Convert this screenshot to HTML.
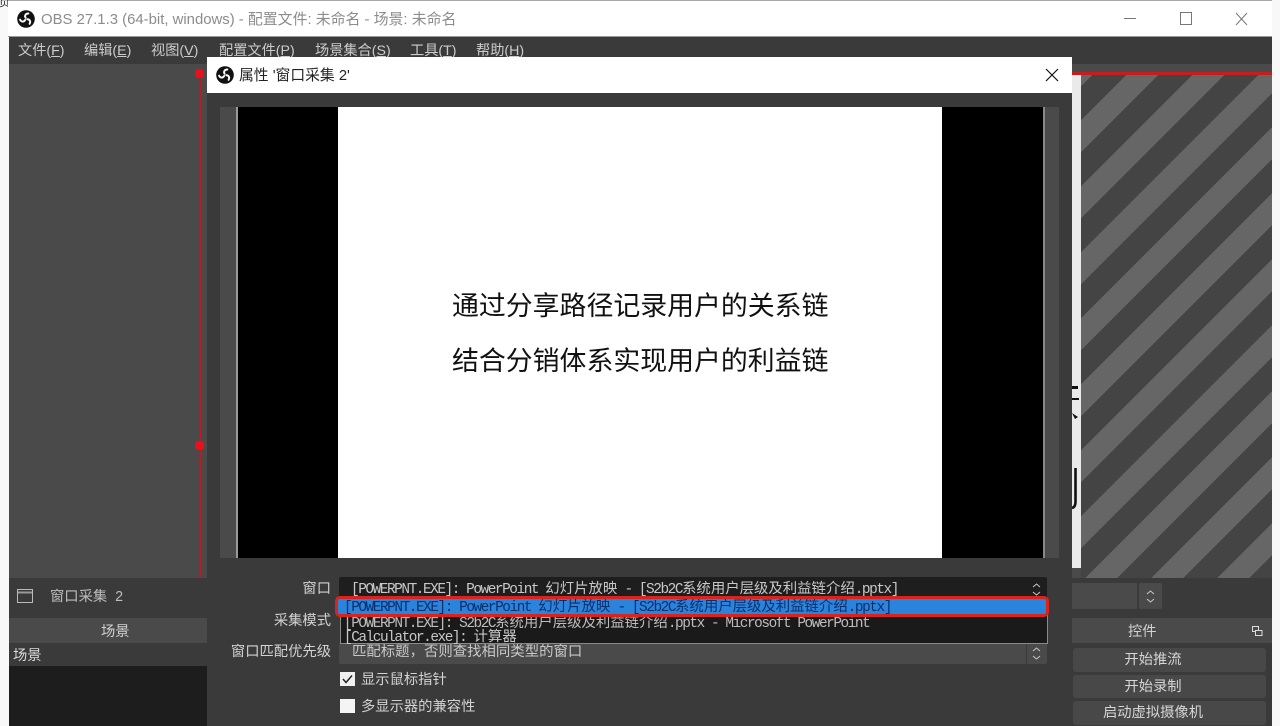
<!DOCTYPE html>
<html lang="zh"><head><meta charset="utf-8"><style>
html,body{margin:0;padding:0;width:1280px;height:726px;overflow:hidden;background:#f8f8f8}
*{box-sizing:border-box}
#r{position:absolute;left:0;top:0;width:1280px;height:726px;filter:blur(.35px)}
.a{position:absolute}
.t{position:absolute;white-space:nowrap;font-family:"Liberation Sans","Noto Sans CJK SC",sans-serif;color:#d2d2d2;font-size:14.300px;line-height:20px}
.m{position:absolute;white-space:nowrap;font-family:"Noto Sans CJK SC",sans-serif;font-size:14.400px;line-height:16px;color:#c8c8c8}
.m i{font-style:normal;font-family:"Liberation Mono",monospace;letter-spacing:-1.440px}
.b{position:absolute;left:1073px;width:193px;padding-right:33px;padding-top:1px;background:#484848;border-radius:3px;text-align:center;color:#d6d6d6;font:14.300px/23px "Liberation Sans","Noto Sans CJK SC",sans-serif}
.n{font-size:14.200px;color:#cccccc}
u{text-decoration:underline;text-underline-offset:1px}
</style></head><body><div id="r">
<div class="t" style="left:-1px;top:-7px;color:#222;font-size:11px">页</div>
<div class="a" style="left:8px;top:0;width:1264px;height:37px;background:#fff;border-top:1px solid #aaa;border-bottom:1px solid #999"></div>
<svg class="a" style="left:17px;top:10px" width="18" height="18" viewBox="0 0 18 18"><circle cx="9" cy="9" r="8.800" fill="#111"/><g fill="none" stroke="#fff" stroke-width="1.900" stroke-linecap="round"><path d="M8.600 7.800C7.300 5.800 8.600 3.400 11.400 3.500"/><path transform="rotate(120 9 9)" d="M8.600 7.800C7.300 5.800 8.600 3.400 11.400 3.500"/><path transform="rotate(240 9 9)" d="M8.600 7.800C7.300 5.800 8.600 3.400 11.400 3.500"/></g></svg>
<div class="t" style="left:41px;top:10px;color:#8c8c8c;font-size:14.900px">OBS 27.1.3 (64-bit, windows) - 配置文件: 未命名 - 场景: 未命名</div>
<svg class="a" style="left:1110px;top:5px" width="150" height="28" viewBox="0 0 150 28" fill="none" stroke="#777" stroke-width="1"><path d="M14 13.500H26"/><rect x="70.500" y="7.500" width="11" height="12"/><path d="M126 8L137 20M137 8L126 20"/></svg>

<div class="a" style="left:9px;top:37px;width:1263px;height:27px;background:#3a3a3a"></div>
<div class="t n" style="left:18px;top:41px">文件(<u>F</u>)</div>
<div class="t n" style="left:84px;top:41px">编辑(<u>E</u>)</div>
<div class="t n" style="left:151px;top:41px">视图(<u>V</u>)</div>
<div class="t n" style="left:219px;top:41px">配置文件(<u>P</u>)</div>
<div class="t n" style="left:315px;top:41px">场景集合(<u>S</u>)</div>
<div class="t n" style="left:410px;top:41px">工具(<u>T</u>)</div>
<div class="t n" style="left:476px;top:41px">帮助(<u>H</u>)</div>

<div class="a" style="left:9px;top:64px;width:1263px;height:514px;background:#4a4a4a"></div>
<div class="a" style="left:1081px;top:75px;width:191px;height:503px;background:repeating-linear-gradient(135deg,#666 0,#666 8px,#444 8px,#444 32px,#666 32px,#666 46.670px)"></div>
<div class="a" style="left:1072px;top:75px;width:9px;height:493px;background:#eaeaea"></div>
<svg class="a" style="left:1072px;top:380px" width="9" height="135" viewBox="0 0 9 135" fill="#111"><rect x="0" y="6" width="6" height="3"/><rect x="0" y="18" width="7" height="2"/><path d="M0 33L6 37L3 39Z"/><path d="M3.500 88V122Q3.500 127 0 128" fill="none" stroke="#111" stroke-width="2.600"/></svg>
<div class="a" style="left:1072px;top:72px;width:200px;height:3px;background:#c41f1f"></div>
<div class="a" style="left:199px;top:73px;width:3px;height:505px;background:#b81c22"></div>
<div class="a" style="left:195px;top:69px;width:9px;height:9px;background:#e8101a;border-radius:3px"></div>
<div class="a" style="left:195px;top:441px;width:9px;height:9px;background:#e8101a;border-radius:3px"></div>

<div class="a" style="left:9px;top:578px;width:1263px;height:40px;background:#3a3a3a"></div>
<svg class="a" style="left:16px;top:588px" width="18" height="16" viewBox="0 0 18 16" fill="none" stroke="#bbb"><rect x="1.500" y="1.500" width="15" height="13"/><path d="M2 4.500H16" stroke="#999" stroke-width="2"/></svg>
<div class="t" style="left:50px;top:587px;color:#bdbdbd">窗口采集 &nbsp;2</div>
<div class="a" style="left:1072px;top:583px;width:65px;height:26px;background:#4a4a4a"></div>
<div class="a" style="left:1139px;top:583px;width:23px;height:26px;background:#4a4a4a;border-radius:2px"></div>
<svg class="a" style="left:1145px;top:588px" width="11" height="17" viewBox="0 0 11 17" fill="none" stroke="#c8c8c8"><path d="M2 6L5.500 3L9 6M2 11L5.500 14L9 11"/></svg>

<div class="a" style="left:9px;top:618px;width:198px;height:25px;background:#4a4a4a"></div>
<div class="t" style="left:101px;top:622px">场景</div>
<div class="a" style="left:9px;top:643px;width:198px;height:23px;background:#3a3a3a"></div>
<div class="a" style="left:9px;top:666px;width:198px;height:60px;background:#1d1d1d"></div>
<div class="t" style="left:13px;top:646px;color:#dcdcdc">场景</div>

<div class="a" style="left:1072px;top:618px;width:200px;height:25px;background:#4a4a4a"></div>
<div class="t" style="left:1128px;top:622px">控件</div>
<svg class="a" style="left:1251px;top:625px" width="12" height="12" viewBox="0 0 12 12" fill="none" stroke="#ddd"><rect x="1.500" y="1.500" width="6" height="5"/><rect x="4.500" y="5.500" width="6.500" height="5" fill="#4a4a4a"/></svg>
<div class="a" style="left:1072px;top:643px;width:200px;height:83px;background:#3a3a3a"></div>
<div class="b" style="top:648px;height:24px">开始推流</div>
<div class="b" style="top:675px;height:23px">开始录制</div>
<div class="b" style="top:701px;height:24px">启动虚拟摄像机</div>

<div class="a" style="left:207px;top:57px;width:865px;height:669px;background:#3a3a3a"></div>
<div class="a" style="left:207px;top:57px;width:865px;height:36px;background:#fff"></div>
<svg class="a" style="left:216px;top:66px" width="18" height="18" viewBox="0 0 18 18"><circle cx="9" cy="9" r="8.800" fill="#111"/><g fill="none" stroke="#fff" stroke-width="1.900" stroke-linecap="round"><path d="M8.600 7.800C7.300 5.800 8.600 3.400 11.400 3.500"/><path transform="rotate(120 9 9)" d="M8.600 7.800C7.300 5.800 8.600 3.400 11.400 3.500"/><path transform="rotate(240 9 9)" d="M8.600 7.800C7.300 5.800 8.600 3.400 11.400 3.500"/></g></svg>
<div class="t" style="left:239px;top:66px;color:#222;font-size:14.800px">属性 '窗口采集 2'</div>
<svg class="a" style="left:1045px;top:68px" width="14" height="14" viewBox="0 0 14 14" fill="none" stroke="#111" stroke-width="1.200"><path d="M1 1L13 13M13 1L1 13"/></svg>

<div class="a" style="left:220px;top:107px;width:839px;height:451px;background:#4a4a4a"></div>
<div class="a" style="left:236px;top:107px;width:2px;height:451px;background:#999"></div>
<div class="a" style="left:1043px;top:107px;width:2px;height:451px;background:#888"></div>
<div class="a" style="left:238px;top:107px;width:805px;height:451px;background:#000"></div>
<div class="a" style="left:338px;top:107px;width:604px;height:451px;background:#fff"></div>
<div class="t" style="left:452px;top:286px;color:#111;font-size:26.900px;line-height:36px;font-family:'Noto Sans CJK SC',sans-serif">通过分享路径记录用户的关系链</div>
<div class="t" style="left:452px;top:341px;color:#111;font-size:26.900px;line-height:36px;font-family:'Noto Sans CJK SC',sans-serif">结合分销体系实现用户的利益链</div>

<div class="t" style="right:949px;top:579px">窗口</div>
<div class="t" style="right:949px;top:611px">采集模式</div>
<div class="t" style="right:949px;top:642px">窗口匹配优先级</div>

<div class="a" style="left:339px;top:577px;width:708px;height:23px;background:#1e1e1e;border-radius:2px"></div>
<div class="m" style="left:351px;top:580px"><i>[POWERPNT.EXE]: PowerPoint </i>幻灯片放映<i> - [S2b2C</i>系统用户层级及利益链介绍<i>.pptx]</i></div>
<svg class="a" style="left:1031px;top:581px" width="11" height="16" viewBox="0 0 11 16" fill="none" stroke="#c8c8c8"><path d="M2 6L5.500 3L9 6M2 11L5.500 14L9 11"/></svg>

<div class="a" style="left:339px;top:643px;width:708px;height:21px;background:#4a4a4a;border-radius:2px"></div>
<div class="a" style="left:1026px;top:643px;width:1px;height:21px;background:#3a3a3a"></div>
<div class="m" style="left:352px;top:643px">匹配标题，否则查找相同类型的窗口</div>
<svg class="a" style="left:1031px;top:645px" width="11" height="16" viewBox="0 0 11 16" fill="none" stroke="#c8c8c8"><path d="M2 6L5.500 3L9 6M2 11L5.500 14L9 11"/></svg>

<div class="a" style="left:340px;top:599px;width:708px;height:45px;background:#1a1a1a;border:1px solid #8a8a8a;border-top:0"></div>
<div class="m" style="left:344px;top:614px;color:#bdbdbd"><i>[POWERPNT.EXE]: S2b2C</i>系统用户层级及利益链介绍<i>.pptx - Microsoft PowerPoint</i></div>
<div class="m" style="left:344px;top:628px;color:#c8c8c8"><i>[Calculator.exe]: </i>计算器</div>
<div class="a" style="left:335px;top:596px;width:714px;height:21px;background:#2a84dc;border:3.500px solid #d8241c;border-radius:5px"></div>
<div class="m" style="left:344px;top:598px;color:#0c2f6c"><i>[POWERPNT.EXE]: PowerPoint </i>幻灯片放映<i> - [S2b2C</i>系统用户层级及利益链介绍<i>.pptx]</i></div>

<div class="a" style="left:340px;top:672px;width:15px;height:14px;background:#f0f0f0"></div>
<svg class="a" style="left:340px;top:672px" width="15" height="14" viewBox="0 0 15 14" fill="none" stroke="#222" stroke-width="1.500"><path d="M3 7L6 10.500L12 3.500"/></svg>
<div class="t" style="left:361px;top:670px">显示鼠标指针</div>
<div class="a" style="left:340px;top:699px;width:15px;height:14px;background:#f4f4f4"></div>
<div class="t" style="left:361px;top:697px">多显示器的兼容性</div>
</div></body></html>
